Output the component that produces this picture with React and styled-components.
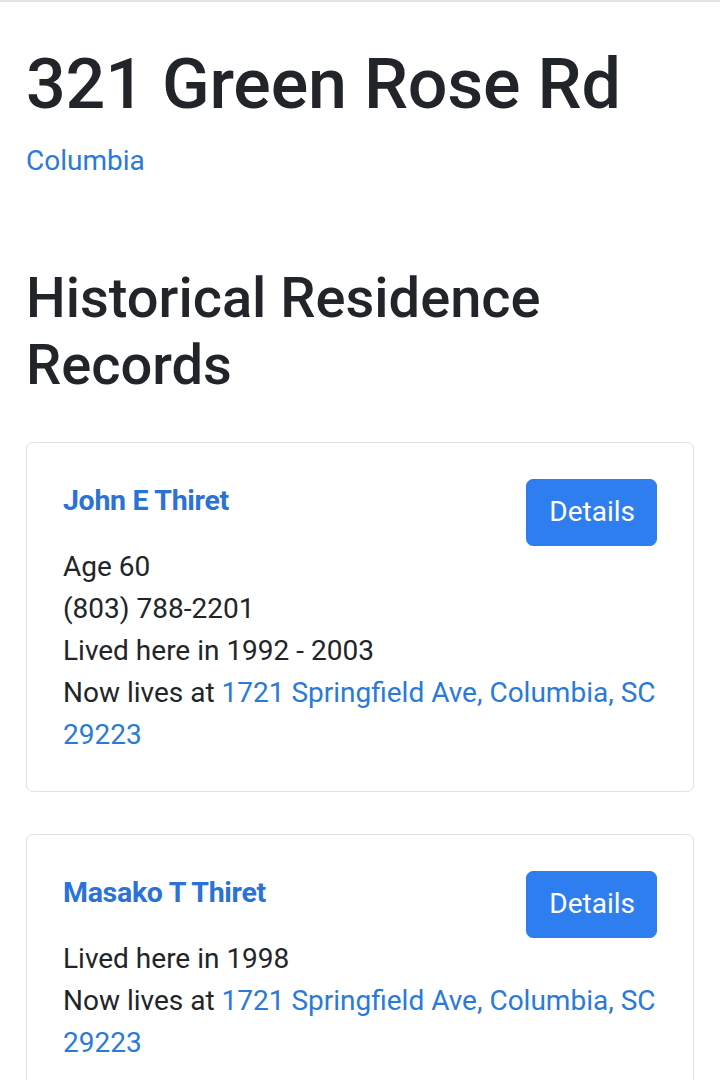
import React from 'react';
import styled, { createGlobalStyle } from 'styled-components';

const GlobalStyle = createGlobalStyle`
  html, body {
    margin: 0;
    padding: 0;
    background: #fff;
  }
  body {
    font-family: Roboto, "Liberation Sans", Arial, sans-serif;
    color: #212529;
    font-size: 28px;
    line-height: 1.5;
  }
`;

const Page = styled.div`
  border-top: 2px solid #e4e4e4;
  padding: 40px 26px 40px;
`;

const Title = styled.h1`
  margin: 0 0 14px;
  font-size: 70px;
  font-weight: 500;
  line-height: 1.2;
  letter-spacing: -0.2px;
`;

const CityLink = styled.a`
  display: block;
  color: #2a7ad8;
  text-decoration: none;
  font-size: 28px;
  line-height: 42px;
`;

const SectionTitle = styled.h2`
  margin: 83px 0 43px;
  font-size: 56px;
  font-weight: 500;
  line-height: 1.2;
`;

const CardList = styled.div`
  display: flex;
  flex-direction: column;
  gap: 42px;
`;

const Card = styled.div`
  border: 1px solid #dfe1e4;
  border-radius: 7px;
  padding: 36px 36px 35px;
`;

const CardHeader = styled.div`
  display: flex;
  justify-content: space-between;
  align-items: flex-start;
`;

const Name = styled.a`
  color: #2a72d6;
  font-weight: 700;
  font-size: 28.5px;
  line-height: 42px;
  text-decoration: none;
  letter-spacing: -0.3px;
  padding-top: 1px;
`;

const DetailsButton = styled.button`
  font-family: inherit;
  font-size: 28px;
  line-height: 42px;
  color: #fff;
  background: #2f7ef0;
  border: 1px solid #2f7ef0;
  border-radius: 7px;
  padding: 11px 21px 12px 22px;
  cursor: pointer;
`;

const Line = styled.div`
  font-size: 28px;
  line-height: 42px;
`;

const AddressLink = styled.a`
  color: #2a7ad8;
  text-decoration: none;
`;

const records = [
  {
    name: 'John E Thiret',
    age: 60,
    phone: '(803) 788-2201',
    lived: '1992 - 2003',
    now: '1721 Springfield Ave, Columbia, SC 29223',
  },
  {
    name: 'Masako T Thiret',
    lived: '1998',
    now: '1721 Springfield Ave, Columbia, SC 29223',
  },
];

export default function App() {
  return (
    <>
      <GlobalStyle />
      <Page>
        <Title>321 Green Rose Rd</Title>
        <CityLink href="#">Columbia</CityLink>
        <SectionTitle>Historical Residence Records</SectionTitle>
        <CardList>
          {records.map(r => (
            <Card key={r.name}>
              <CardHeader>
                <Name href="#">{r.name}</Name>
                <DetailsButton>Details</DetailsButton>
              </CardHeader>
              {r.age && <Line>Age {r.age}</Line>}
              {r.phone && <Line>{r.phone}</Line>}
              <Line>Lived here in {r.lived}</Line>
              <Line>
                Now lives at <AddressLink href="#">{r.now}</AddressLink>
              </Line>
            </Card>
          ))}
        </CardList>
      </Page>
    </>
  );
}
